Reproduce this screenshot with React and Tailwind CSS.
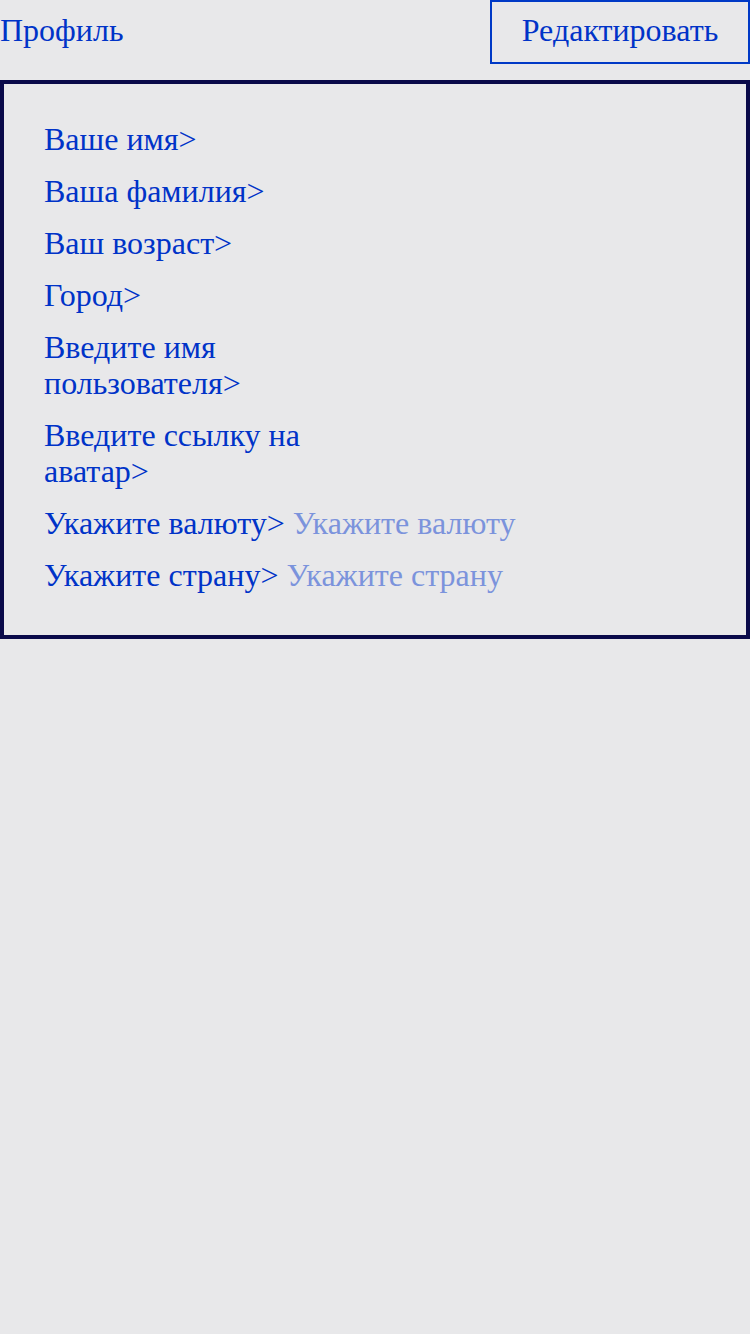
import React from 'react';

const fields = [
  { label: 'Ваше имя>' },
  { label: 'Ваша фамилия>' },
  { label: 'Ваш возраст>' },
  { label: 'Город>' },
  { label: 'Введите имя пользователя>' },
  { label: 'Введите ссылку на аватар>' },
  { label: 'Укажите валюту>', placeholder: 'Укажите валюту' },
  { label: 'Укажите страну>', placeholder: 'Укажите страну' },
];

const ProfilePage = () => {
  return (
    <div
      className="min-h-screen bg-[#e8e8ea] text-[#0033c8]"
      style={{ fontFamily: '"Liberation Serif", "Times New Roman", serif' }}
    >
      {/* Header */}
      <header className="flex items-start justify-between mb-4">
        <h1 className="text-[32px] leading-[60px]">Профиль</h1>
        <button className="w-[260px] h-16 border-2 border-[#0039c6] text-[32px] leading-none pb-1">
          Редактировать
        </button>
      </header>

      {/* Fields */}
      <section className="border-4 border-[#0a0a4a] px-10 pt-[37px] pb-[42px] flex flex-col gap-4">
        {fields.map((f) => (
          <div key={f.label} className="flex items-start text-[32px] leading-9">
            <span className="max-w-[330px]">{f.label}</span>
            {f.placeholder && (
              <input
                type="text"
                placeholder={f.placeholder}
                className="ml-2 bg-transparent outline-none text-[32px] leading-9 placeholder:text-[#7b93dc] w-[300px]"
              />
            )}
          </div>
        ))}
      </section>
    </div>
  );
};

export default ProfilePage;
